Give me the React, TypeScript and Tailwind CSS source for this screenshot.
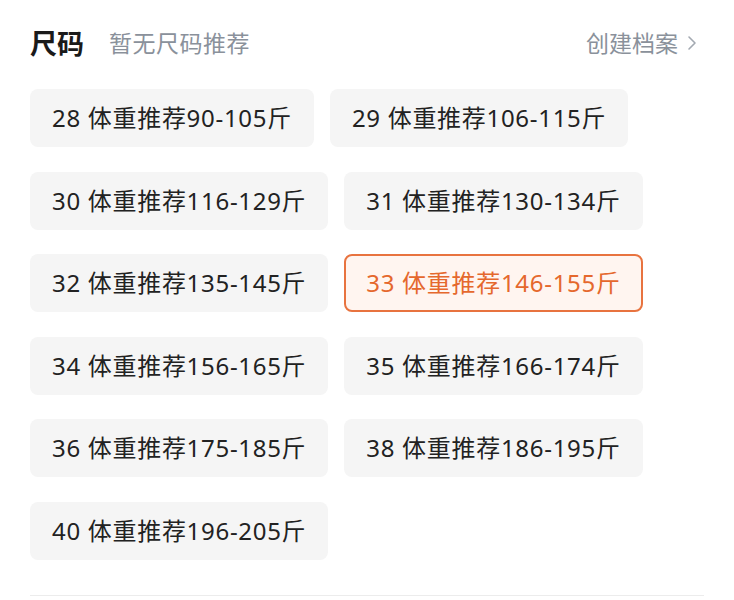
import React, { useState } from "react";

const sizes = [
  { code: "28", range: "90-105" },
  { code: "29", range: "106-115" },
  { code: "30", range: "116-129" },
  { code: "31", range: "130-134" },
  { code: "32", range: "135-145" },
  { code: "33", range: "146-155" },
  { code: "34", range: "156-165" },
  { code: "35", range: "166-174" },
  { code: "36", range: "175-185" },
  { code: "38", range: "186-195" },
  { code: "40", range: "196-205" }
];

export default function App() {
  const [selected, setSelected] = useState("33");

  return (
    <div
      className="w-[734px] h-[600px] bg-white overflow-hidden"
      style={{ fontFamily: '"Noto Sans", "Noto Sans CJK SC", sans-serif' }}
    >
      {/* Header */}
      <div className="h-[89px] pb-[3px] pl-[30px] pr-[37px] flex items-center justify-between">
        <div className="flex items-center gap-[25px]">
          <h2 className="text-[27px] font-bold text-[#1a1a1a] leading-none">尺码</h2>
          <span className="text-[23px] text-[#8a919b] leading-none tracking-[0.5px]">暂无尺码推荐</span>
        </div>
        <button className="flex items-center gap-[9px] text-[23px] text-[#8a919b] leading-none">
          创建档案
          <svg width="10" height="16" viewBox="0 0 10 16" fill="none">
            <polyline points="2,2 8,8 2,14" stroke="#a3a9b1" strokeWidth="1.6" strokeLinecap="round" strokeLinejoin="round" />
          </svg>
        </button>
      </div>

      {/* Size chips */}
      <div className="pl-[30px] pr-[30px] flex flex-wrap gap-x-[16px] gap-y-[24.5px]">
        {sizes.map((s) => {
          const active = s.code === selected;
          return (
            <button
              key={s.code}
              onClick={() => setSelected(s.code)}
              className={`h-[58px] rounded-[8px] flex items-center text-[24px] leading-none whitespace-nowrap tracking-[0.7px] ${
                active
                  ? "bg-[#fff5f0] border-2 border-[#e8733f] text-[#e5682d] px-[20px]"
                  : "bg-[#f5f5f5] text-[#222222] px-[22px]"
              }`}
            >
              {s.code}&nbsp;体重推荐{s.range}斤
            </button>
          );
        })}
      </div>

      {/* Divider */}
      <div className="mt-[35px] ml-[30px] mr-[30px] border-t border-[#ececec]" />
    </div>
  );
}
